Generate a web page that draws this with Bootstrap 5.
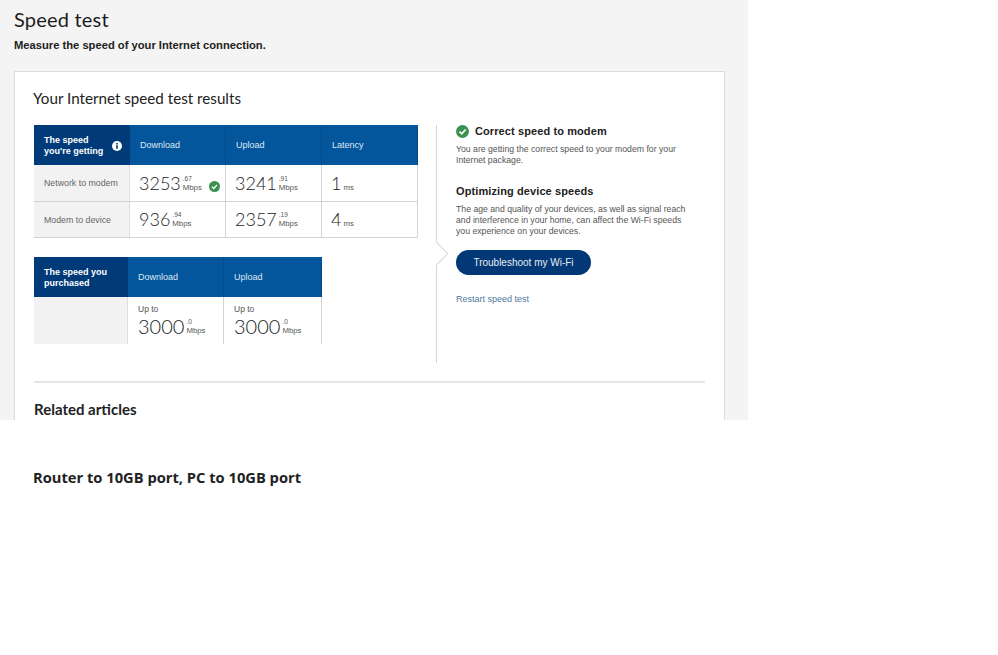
<!DOCTYPE html>
<html lang="en">
<head>
<meta charset="utf-8">
<title>Speed test</title>
<link href="https://cdn.jsdelivr.net/npm/bootstrap@5.3.0/dist/css/bootstrap.min.css" rel="stylesheet">
<style>
html,body{background:#fff;margin:0}
body{font-family:"Liberation Sans",Arial,sans-serif;color:#222;font-size:10px}
.sheet{width:748px;height:420px;background:#f4f4f4;overflow:hidden;padding:9px 23px 0 14px}
.page-h{font-family:Lato,sans-serif;font-size:20px;line-height:21px;font-weight:400;margin:0;letter-spacing:.2px;color:#1c1c1c}
.page-sub{font-size:11.2px;line-height:14px;font-weight:700;margin:8px 0 0;color:#222}
.result-card{background:#fff;border:1px solid #dcdcdc;border-bottom:0;margin-top:19px;height:360px;padding:17px 19px 0}
.result-h{font-family:Lato,sans-serif;font-size:15.2px;line-height:18px;font-weight:400;margin:0 0 0 -1px;color:#222}
.body-row{margin-top:18px;height:238px}
.tables{width:385px;flex:none}
.sp-grid{display:grid;grid-template-columns:96px 96px 96px 96px;width:384px}
.sp-grid.two{grid-template-columns:94px 96px 98px;width:288px;margin-top:19px}
.hd{height:40px;background:#03559c;color:#dfe9f3;display:flex;align-items:center;padding:2px 0 0 10px;border-right:1px solid #024a8a;font-size:9px}
.hd:last-child{border-right:0}
.hd.lead-hd{background:#003a78;color:#fff;font-weight:700;font-size:9px;line-height:11px;justify-content:space-between;padding:2px 8px 0 10px;border:0}
.info{width:10px;height:10px;flex:none}
.cell{height:36.5px;border-right:1px solid #d3d3d3;border-bottom:1px solid #d3d3d3;display:flex;align-items:center;padding-left:9px;background:#fff;white-space:nowrap}
.cell.lbl{background:#f2f2f2;color:#666;font-size:8.8px;padding:2px 0 0 10px;border-right:1px solid #ddd}
.tall{height:47px;border-bottom:0;display:block;padding:7px 0 0 10px;color:#555;font-size:8.5px;line-height:10px}
.tall.lbl{background:#f2f2f2}
.tall .d-flex{margin-top:2px}
.num{font-family:Lato,sans-serif;font-weight:300;font-size:18px;line-height:20px;color:#222}
.tall .num{font-size:20px}
.unit{display:inline-flex;flex-direction:column;font-size:7.8px;line-height:9px;color:#555;margin-left:2px;align-self:center}
.unit i{font-style:normal;font-size:6.5px;line-height:9px}
.ok{width:11px;height:11px;margin-left:7px;margin-top:8px}
.side{position:relative;border-left:1px solid #d6d6d6;margin-left:17px;padding:0 14px 0 19px;width:269px;height:238px;flex:none;color:#555;font-size:8.7px;line-height:11px}
.notch{position:absolute;left:-9px;top:120px;width:17px;height:17px;background:#fff;border-top:1px solid #d6d6d6;border-right:1px solid #d6d6d6;transform:rotate(45deg)}
.side-h{font-size:11px;line-height:13px;font-weight:700;color:#222;margin:0;letter-spacing:.1px}
.side-h.second{margin-top:19px}
.side-p{margin:6px 0 0}
.check{width:13px;height:13px;flex:none}
.head-row{gap:6px}
.wifi-btn{background:#033876;color:#e6ecf3;border:0;border-radius:13px;height:25px;width:135px;font-size:10px;padding:0;display:block;margin:13px 0 0;position:relative}
.restart{display:block;color:#4f7aa0;text-decoration:none;font-size:9px;line-height:12px;margin-top:18px}
.rule{height:0;border-top:2px solid #e6e6e6;margin:18px 0 0}
.related{font-family:Lato,sans-serif;font-weight:700;font-size:15px;line-height:17px;margin:18px 0 0;color:#222}
.caption{font-family:"Open Sans",sans-serif;font-weight:700;font-size:14.7px;line-height:20px;color:#222;margin:47px 0 0 33px}
</style>
</head>
<body>
<main class="sheet">
  <h1 class="page-h">Speed test</h1>
  <p class="page-sub">Measure the speed of your Internet connection.</p>
  <section class="result-card">
    <h2 class="result-h">Your Internet speed test results</h2>
    <div class="d-flex body-row">
      <div class="tables">
        <div class="sp-grid">
          <div class="hd lead-hd"><span>The speed<br>you're getting</span>
            <svg class="info" viewBox="0 0 10 10"><circle cx="5" cy="5" r="5" fill="#fff"/><rect x="4.2" y="4.2" width="1.6" height="3.6" fill="#003a78"/><rect x="4.2" y="2" width="1.6" height="1.5" fill="#003a78"/></svg></div>
          <div class="hd">Download</div><div class="hd">Upload</div><div class="hd">Latency</div>

          <div class="cell lbl">Network to modem</div>
          <div class="cell"><span class="num">3253</span><span class="unit"><i>.67</i>Mbps</span>
            <svg class="ok" viewBox="0 0 12 12"><circle cx="6" cy="6" r="6" fill="#3c9150"/><path d="M3.2 6.2 5.2 8.1 8.8 4.2" fill="none" stroke="#fff" stroke-width="1.5"/></svg></div>
          <div class="cell"><span class="num">3241</span><span class="unit"><i>.91</i>Mbps</span></div>
          <div class="cell"><span class="num">1</span><span class="unit"><i>&nbsp;</i>ms</span></div>

          <div class="cell lbl">Modem to device</div>
          <div class="cell"><span class="num">936</span><span class="unit"><i>.94</i>Mbps</span></div>
          <div class="cell"><span class="num">2357</span><span class="unit"><i>.19</i>Mbps</span></div>
          <div class="cell"><span class="num">4</span><span class="unit"><i>&nbsp;</i>ms</span></div>
        </div>
        <div class="sp-grid two">
          <div class="hd lead-hd"><span>The speed you<br>purchased</span></div>
          <div class="hd">Download</div><div class="hd">Upload</div>
          <div class="cell tall lbl"></div>
          <div class="cell tall">Up to<div class="d-flex"><span class="num">3000</span><span class="unit"><i>.0</i>Mbps</span></div></div>
          <div class="cell tall">Up to<div class="d-flex"><span class="num">3000</span><span class="unit"><i>.0</i>Mbps</span></div></div>
        </div>
      </div>
      <aside class="side">
        <span class="notch"></span>
        <div class="d-flex align-items-center head-row position-relative">
          <svg class="check" viewBox="0 0 13 13"><circle cx="6.5" cy="6.5" r="6.5" fill="#3c9150"/><path d="M3.5 6.7 5.7 8.8 9.6 4.5" fill="none" stroke="#fff" stroke-width="1.6"/></svg>
          <h3 class="side-h">Correct speed to modem</h3>
        </div>
        <p class="side-p position-relative">You are getting the correct speed to your modem for your Internet package.</p>
        <h3 class="side-h second position-relative">Optimizing device speeds</h3>
        <p class="side-p position-relative">The age and quality of your devices, as well as signal reach and interference in your home, can affect the Wi-Fi speeds you experience on your devices.</p>
        <button class="btn wifi-btn" type="button">Troubleshoot my Wi-Fi</button>
        <a class="restart position-relative" href="#">Restart speed test</a>
      </aside>
    </div>
    <div class="rule"></div>
    <h2 class="related">Related articles</h2>
  </section>
</main>
<p class="caption">Router to 10GB port, PC to 10GB port</p>
<script src="https://cdn.jsdelivr.net/npm/bootstrap@5.3.0/dist/js/bootstrap.bundle.min.js"></script>
</body>
</html>
